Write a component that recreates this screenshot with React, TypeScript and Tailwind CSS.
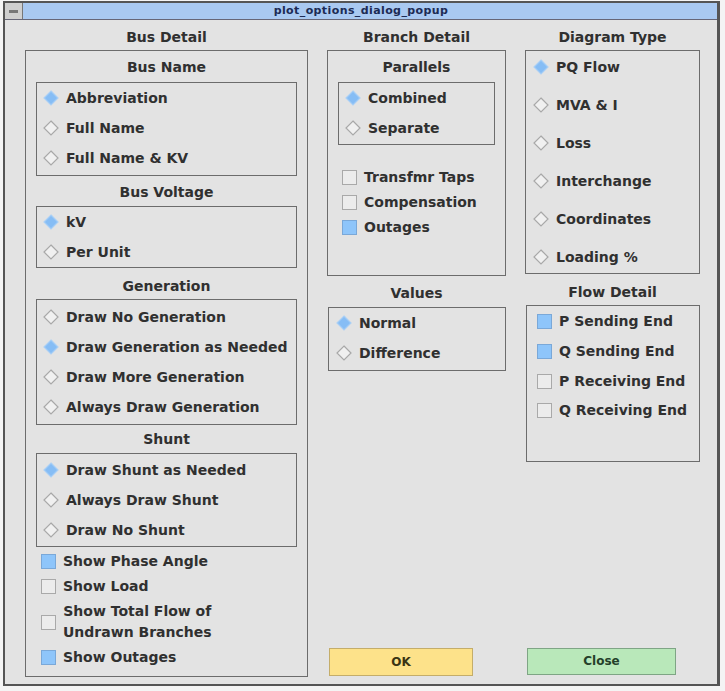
import React from 'react';

const font = "font-['DejaVu_Sans',sans-serif]";

function Diamond({ on }: { on?: boolean }) {
  return (
    <svg width="16" height="16" viewBox="0 0 16 16" className="shrink-0">
      <path
        d="M8 1 L15 8 L8 15 L1 8 Z"
        fill={on ? '#86bdf5' : '#f0f0f0'}
        stroke={on ? '#a9cff5' : '#a8a8a8'}
        strokeWidth="1.2"
      />
    </svg>
  );
}

function Check({ on }: { on?: boolean }) {
  return (
    <span
      className={`inline-block w-[15px] h-[15px] shrink-0 border ${
        on ? 'bg-[#8ec5fa] border-[#7aa8d8]' : 'bg-[#ececec] border-[#a9a9a9]'
      }`}
    />
  );
}

function Radio({ label, on, h = 'h-[30px]' }: { label: string; on?: boolean; h?: string }) {
  return (
    <div className={`flex items-center ${h} gap-[7px]`}>
      <Diamond on={on} />
      <span>{label}</span>
    </div>
  );
}

function CheckRow({ label, on, h = 'h-[25px]' }: { label: string; on?: boolean; h?: string }) {
  return (
    <div className={`flex items-center ${h} gap-[7px]`}>
      <Check on={on} />
      <span>{label}</span>
    </div>
  );
}

function Heading({ children }: { children: React.ReactNode }) {
  return <div className="h-[20px] leading-[20px] text-center">{children}</div>;
}

export default function App() {
  return (
    <div className={`w-[725px] h-[691px] bg-[#f4f4f4] pl-[3px] pt-[1px] ${font}`}>
      <div className="w-[717px] h-[685px] bg-[#e3e3e3] border-l-2 border-r-[3px] border-b-2 border-t-2 border-[#555] flex flex-col text-[14px] font-bold text-[#303030]">
        {/* title bar */}
        <div className="h-[17px] flex bg-[#a9c9f1] border-b border-[#667]">
          <div className="w-[18px] h-full bg-[#cfcfcf] border-r border-[#777] flex items-center justify-center">
            <span className="block w-[9px] h-[3px] bg-[#777]" />
          </div>
          <div className="flex-1 text-center text-[11px] tracking-[0.4px] font-bold leading-[16px] text-[#1c2b55] pr-[18px]">
            plot_options_dialog_popup
          </div>
        </div>

        <div className="flex flex-1 pl-[20px] pt-[7px] pb-[7px] gap-[19px]">
          {/* Bus Detail */}
          <div className="w-[283px] flex flex-col">
            <Heading>Bus Detail</Heading>
            <div className="mt-[3px] flex-1 border border-[#6c6c6c] px-[10px] pt-[6px]">
              <Heading>Bus Name</Heading>
              <div className="mt-[5px] border border-[#6c6c6c] pl-[6px] pb-[2px]">
                <Radio label="Abbreviation" on />
                <Radio label="Full Name" />
                <Radio label="Full Name & KV" />
              </div>
              <div className="mt-[6px]"><Heading>Bus Voltage</Heading></div>
              <div className="mt-[4px] border border-[#6c6c6c] pl-[6px]">
                <Radio label="kV" on />
                <Radio label="Per Unit" />
              </div>
              <div className="mt-[8px]"><Heading>Generation</Heading></div>
              <div className="mt-[3px] border border-[#6c6c6c] pl-[6px] pt-[2px] pb-[2px]">
                <Radio label="Draw No Generation" />
                <Radio label="Draw Generation as Needed" on />
                <Radio label="Draw More Generation" />
                <Radio label="Always Draw Generation" />
              </div>
              <div className="mt-[4px]"><Heading>Shunt</Heading></div>
              <div className="mt-[4px] border border-[#6c6c6c] pl-[6px] pt-[1px] pb-[1px]">
                <Radio label="Draw Shunt as Needed" on />
                <Radio label="Always Draw Shunt" />
                <Radio label="Draw No Shunt" />
              </div>
              <div className="mt-[2px] pl-[5px]">
                <CheckRow label="Show Phase Angle" on />
                <CheckRow label="Show Load" />
                <div className="flex items-center h-[46px] gap-[7px]">
                  <Check />
                  <span className="text-center leading-[21px]">
                    Show Total Flow of
                    <br />
                    Undrawn Branches
                  </span>
                </div>
                <CheckRow label="Show Outages" on />
              </div>
            </div>
          </div>

          {/* Branch Detail */}
          <div className="w-[179px] flex flex-col">
            <Heading>Branch Detail</Heading>
            <div className="mt-[3px] h-[226px] border border-[#6c6c6c] px-[10px] pt-[6px]">
              <Heading>Parallels</Heading>
              <div className="mt-[5px] border border-[#6c6c6c] pl-[6px] pb-[1px]">
                <Radio label="Combined" on />
                <Radio label="Separate" />
              </div>
              <div className="mt-[20px] pl-[4px]">
                <CheckRow label="Transfmr Taps" />
                <CheckRow label="Compensation" />
                <CheckRow label="Outages" on />
              </div>
            </div>
            <div className="mt-[7px]"><Heading>Values</Heading></div>
            <div className="mt-[4px] ml-[1px] h-[64px] border border-[#6c6c6c] pl-[7px]">
              <Radio label="Normal" on />
              <Radio label="Difference" />
            </div>
            <div className="mt-auto ml-[2px] mb-[1px] w-[144px] h-[28px] bg-[#fde28a] border border-[#c4ad6a] text-center leading-[26px] font-bold text-[#3a3413] text-[12px]">
              OK
            </div>
          </div>

          {/* Diagram Type */}
          <div className="w-[175px] flex flex-col">
            <Heading>Diagram Type</Heading>
            <div className="mt-[3px] h-[224px] border border-[#6c6c6c] pl-[7px] flex flex-col gap-[6px]">
              <Radio label="PQ Flow" on h="h-[32px]" />
              <Radio label="MVA & I" h="h-[32px]" />
              <Radio label="Loss" h="h-[32px]" />
              <Radio label="Interchange" h="h-[32px]" />
              <Radio label="Coordinates" h="h-[32px]" />
              <Radio label="Loading %" h="h-[32px]" />
            </div>
            <div className="mt-[8px]"><Heading>Flow Detail</Heading></div>
            <div className="mt-[3px] ml-[1px] h-[157px] border border-[#6c6c6c] pl-[10px]">
              <CheckRow label="P Sending End" on h="h-[30px]" />
              <CheckRow label="Q Sending End" on h="h-[30px]" />
              <CheckRow label="P Receiving End" h="h-[30px]" />
              <CheckRow label="Q Receiving End" h="h-[29px]" />
            </div>
            <div className="mt-auto ml-[2px] mb-[2px] w-[149px] h-[27px] bg-[#b9e8ba] border border-[#7fa585] text-center leading-[25px] font-bold text-[#24402a] text-[12px]">
              Close
            </div>
          </div>
        </div>
      </div>
    </div>
  );
}
